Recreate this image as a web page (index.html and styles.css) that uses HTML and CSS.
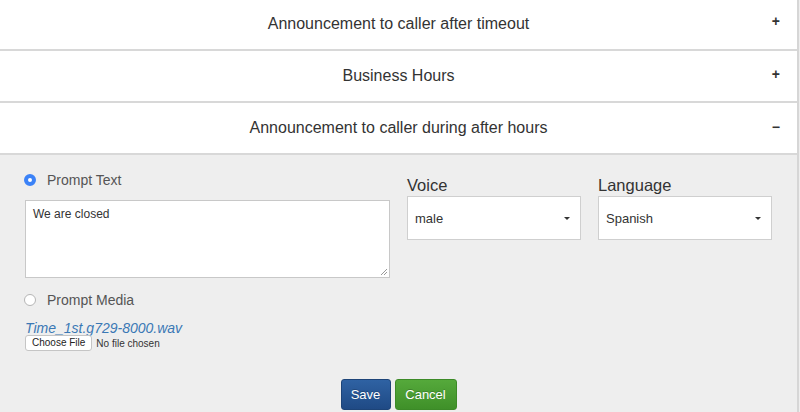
FILE: index.html
```html
<!DOCTYPE html>
<html lang="en">
<head>
  <meta charset="UTF-8">
  <title>After hours settings</title>
  <link rel="stylesheet" href="styles.css">
</head>
<body>
  <div class="accordion">
    <div class="panelHead">
      <span class="panelTitle">Announcement to caller after timeout</span>
      <span class="toggle">+</span>
    </div>
    <div class="panelHead">
      <span class="panelTitle">Business Hours</span>
      <span class="toggle">+</span>
    </div>
    <div class="panelHead">
      <span class="panelTitle">Announcement to caller during after hours</span>
      <span class="toggle minus">&minus;</span>
    </div>

    <div class="panelBody">
      <div class="formRow">
        <div class="promptCol">
          <label class="radioRow">
            <span class="radio checked"></span>
            <span>Prompt Text</span>
          </label>
          <div class="textBox">We are closed<span class="grip"></span></div>

          <label class="radioRow media">
            <span class="radio"></span>
            <span>Prompt Media</span>
          </label>
          <a class="fileLink">Time_1st.g729-8000.wav</a>
          <div class="fileRow">
            <span class="fileBtn">Choose File</span>
            <span class="fileNone">No file chosen</span>
          </div>
        </div>

        <div class="selectCol">
          <div class="fieldLabel">Voice</div>
          <div class="selectBox">male<span class="caret"></span></div>
        </div>
        <div class="selectCol">
          <div class="fieldLabel">Language</div>
          <div class="selectBox">Spanish<span class="caret"></span></div>
        </div>
      </div>

      <div class="actions">
        <button class="btn save">Save</button>
        <button class="btn cancel">Cancel</button>
      </div>
    </div>
  </div>
</body>
</html>
```

FILE: styles.css
```css
body {
  margin: 0;
  background: #eeeeee;
  font-family: "Liberation Sans", Arial, sans-serif;
  color: #333;
  overflow: hidden;
}

.accordion {
  width: 797px;
  border-right: 2px solid #d6d6d6;
  margin-top: -2px;
  min-height: 420px;
}

.panelHead {
  position: relative;
  height: 50px;
  background: #fff;
  border-bottom: 2px solid #d8d8d8;
  display: flex;
  align-items: center;
  justify-content: center;
}

.panelHead:first-child {
  height: 51px;
}

.panelTitle {
  font-size: 16px;
  color: #333;
}

.toggle {
  position: absolute;
  right: 17px;
  top: 15px;
  font-size: 14px;
  font-weight: bold;
  color: #333;
}

.toggle.minus {
  top: 16px;
}

.panelBody {
  background: #eeeeee;
  padding: 17px 0 0 24px;
}

.formRow {
  display: flex;
}

.promptCol {
  width: 366px;
  display: flex;
  flex-direction: column;
}

.radioRow {
  display: flex;
  align-items: center;
  gap: 11px;
  font-size: 14px;
  color: #555;
  height: 16px;
}

.radioRow.media {
  margin-top: 14px;
}

.radio {
  width: 10px;
  height: 10px;
  border-radius: 50%;
  border: 1px solid #b5b5b5;
  background: #fff;
}

.radio.checked {
  width: 4px;
  height: 4px;
  border: 4px solid #3b82f7;
  background: #fff;
}

.textBox {
  position: relative;
  margin-top: 12px;
  margin-left: 1px;
  height: 64px;
  border: 1px solid #c8c8c8;
  background: #fff;
  padding: 6px 6px 6px 7px;
  font-size: 12px;
  color: #333;
}

.grip {
  position: absolute;
  right: 2px;
  bottom: 2px;
  width: 6px;
  height: 6px;
  background: linear-gradient(135deg, transparent 45%, #999 45%, #999 55%, transparent 55%, transparent 72%, #999 72%, #999 82%, transparent 82%);
}

.fileLink {
  margin-top: 12px;
  margin-left: 1px;
  font-size: 14px;
  font-style: italic;
  color: #3a78b5;
}

.fileRow {
  display: flex;
  align-items: center;
  gap: 4px;
  margin-top: -1px;
  margin-left: 1px;
}

.fileBtn {
  font-size: 10px;
  color: #222;
  background: #fff;
  border: 1px solid #c5c5c5;
  border-radius: 3px;
  padding: 1px 6px 2px;
}

.fileNone {
  font-size: 10px;
  color: #333;
}

.selectCol {
  width: 174px;
  margin-left: 17px;
  padding-top: 4px;
}

.selectCol + .selectCol {
  margin-left: 17px;
}

.fieldLabel {
  font-size: 16.5px;
  color: #333;
  height: 20px;
}

.selectBox {
  position: relative;
  height: 44px;
  background: #fff;
  border: 1px solid #cfcfcf;
  box-sizing: border-box;
  display: flex;
  align-items: center;
  padding-left: 7px;
  font-size: 13px;
  color: #333;
}

.caret {
  position: absolute;
  right: 10px;
  top: 20px;
  border-left: 3px solid transparent;
  border-right: 3px solid transparent;
  border-top: 3px solid #333;
}

.actions {
  display: flex;
  justify-content: center;
  gap: 4px;
  margin-top: 28px;
  padding-right: 24px;
}

.btn {
  font-family: "Liberation Sans", Arial, sans-serif;
  font-size: 13px;
  color: #fff;
  height: 31px;
  border-radius: 3px;
  cursor: pointer;
  text-shadow: 0 -1px 0 rgba(0, 0, 0, 0.2);
}

.save {
  width: 50px;
  background: linear-gradient(#2f62a3, #1f4a85);
  border: 1px solid #1d4478;
}

.cancel {
  width: 62px;
  background: linear-gradient(#55a93b, #3f9029);
  border: 1px solid #3c8a27;
}
```
